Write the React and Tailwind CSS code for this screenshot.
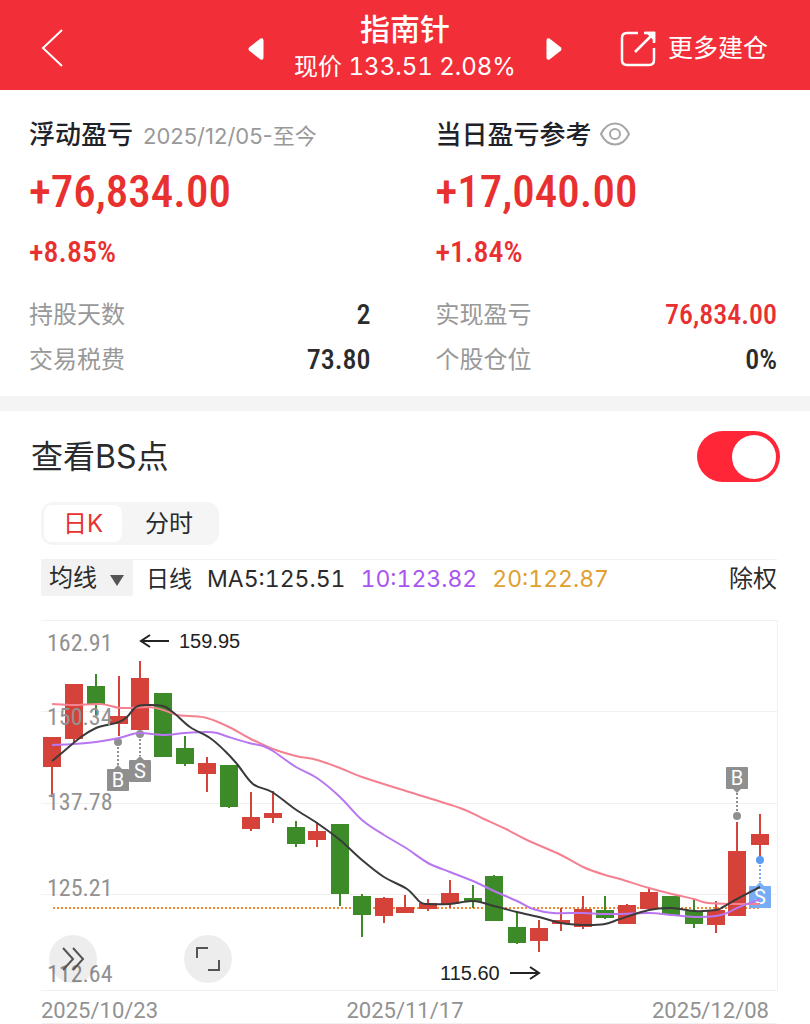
import { useState } from "react";

// [x, high, open/close top, open/close bottom, low, direction]
const CANDLES = [
    [11, 117, 117, 147, 177, "up"],
    [33, 64, 64, 119, 125, "up"],
    [55, 54, 66, 84, 95, "down"],
    [78, 56, 96, 104, 116, "up"],
    [99, 41, 58, 110, 114, "up"],
    [122, 73, 73, 137, 137, "down"],
    [144, 116, 128, 144, 146, "down"],
    [166, 137, 143, 154, 172, "up"],
    [188, 145, 145, 187, 188, "down"],
    [210, 172, 197, 209, 211, "up"],
    [232, 171, 193, 198, 203, "up"],
    [255, 201, 207, 224, 227, "down"],
    [276, 202, 211, 220, 227, "up"],
    [299, 204, 204, 274, 286, "down"],
    [321, 274, 276, 295, 317, "down"],
    [343, 277, 278, 296, 303, "up"],
    [364, 275, 287, 293, 293, "up"],
    [387, 279, 283, 289, 291, "up"],
    [409, 260, 273, 284, 288, "up"],
    [432, 265, 278, 282, 288, "down"],
    [453, 255, 256, 301, 301, "down"],
    [476, 292, 307, 323, 324, "down"],
    [498, 300, 308, 321, 332, "up"],
    [520, 288, 300, 304, 311, "up"],
    [542, 276, 289, 307, 309, "up"],
    [564, 276, 290, 298, 299, "down"],
    [586, 284, 285, 304, 304, "up"],
    [608, 268, 272, 289, 289, "up"],
    [630, 276, 276, 295, 296, "down"],
    [653, 279, 291, 304, 308, "down"],
    [675, 281, 290, 305, 313, "up"],
    [696, 202, 231, 296, 296, "up"],
    [719, 194, 214, 225, 237, "up"],
];

const MA5 = [
    [11, 141], [22, 132], [40, 117], [55, 108], [66, 105], [78, 102], [86, 97], [95, 87], [105, 85], [122, 86],
    [133, 93], [149, 107], [169, 118], [184, 131], [196, 144], [212, 164], [231, 172], [254, 189], [276, 203],
    [299, 220], [321, 240], [343, 257], [366, 269], [379, 282], [387, 284], [409, 284], [432, 281], [453, 286],
    [476, 292], [498, 297], [520, 303], [542, 305], [564, 304], [579, 299], [608, 290], [631, 288], [653, 291],
    [675, 290], [682, 287], [696, 279], [719, 267],
];

const MA10 = [
    [11, 125], [33, 124], [55, 122], [78, 118], [92, 114], [101, 113], [122, 115], [144, 113], [166, 112],
    [176, 113], [188, 117], [208, 123], [222, 126], [232, 131], [255, 147], [276, 158], [299, 177], [321, 200],
    [343, 215], [365, 228], [387, 243], [409, 252], [432, 261], [453, 271], [476, 281], [492, 289], [512, 293],
    [542, 293], [559, 294], [579, 294], [608, 293], [631, 295], [653, 297], [675, 296], [686, 293], [696, 288],
    [719, 279],
];

const MA20 = [
    [11, 84], [33, 85], [60, 84], [80, 88], [108, 87], [122, 90], [136, 95], [149, 96], [166, 98], [188, 107],
    [208, 118], [232, 129], [255, 136], [276, 140], [299, 148], [321, 157], [365, 171], [419, 188], [443, 199],
    [465, 209], [486, 220], [520, 235], [542, 247], [564, 255], [579, 259], [608, 268], [631, 274], [653, 279],
    [667, 283], [696, 284], [719, 284],
];

const PRICE_LABELS = [
    { text: "162.91", y: 31 },
    { text: "150.34", y: 105 },
    { text: "137.78", y: 190 },
    { text: "125.21", y: 276 },
    { text: "112.64", y: 362 },
];

// y is where the flag box starts, dot is the price point it belongs to
const FLAGS = [
    { label: "B", x: 77, y: 149, dot: 122, color: "#8f8f8f", dotColor: "#8f8f8f" },
    { label: "S", x: 99, y: 140, dot: 114, color: "#8f8f8f", dotColor: "#8f8f8f" },
    { label: "B", x: 696, y: 147, dot: 196, color: "#8f8f8f", dotColor: "#8f8f8f" },
    { label: "S", x: 719, y: 266, dot: 240, color: "#76adf5", dotColor: "#5a9cf0" },
];

const smoothPath = (points) => {
    let d = `M${points[0][0]} ${points[0][1]}`;
    for (let i = 0; i < points.length - 1; i++) {
        const p0 = points[i - 1] || points[i];
        const p1 = points[i];
        const p2 = points[i + 1];
        const p3 = points[i + 2] || p2;
        d += ` C${p1[0] + (p2[0] - p0[0]) / 6} ${p1[1] + (p2[1] - p0[1]) / 6}`;
        d += ` ${p2[0] - (p3[0] - p1[0]) / 6} ${p2[1] - (p3[1] - p1[1]) / 6} ${p2[0]} ${p2[1]}`;
    }
    return d;
};

const Flag = ({ label, x, y, dot, color, dotColor }) => {
    const below = dot < y;
    return (
        <g>
            <line
                x1={x}
                x2={x}
                y1={below ? dot + 5 : y + 26}
                y2={below ? y - 4 : dot - 5}
                stroke={color}
                strokeWidth="2"
                strokeDasharray="2 2"
            />
            <circle cx={x} cy={dot} r="4" fill={dotColor} />
            <rect x={x - 11} y={y} width="22" height="22" rx="1" fill={color} />
            <path
                d={below ? `M${x - 4} ${y}l4 -4l4 4z` : `M${x - 4} ${y + 22}l4 4l4 -4z`}
                fill={color}
            />
            <text x={x} y={y + 18} textAnchor="middle" fill="#fff" className="font-['Roboto'] text-[20px]">
                {label}
            </text>
        </g>
    );
};

const KLineChart = () => (
    <svg viewBox="0 0 736 371" className="block w-full h-auto overflow-visible" role="img" aria-label="日K">
        <g stroke="#f1f1f1" strokeWidth="1">
            <path d="M0 .5H736M0 91.5H736M0 183.5H736M0 274.5H736M0 370.5H736M736.5 0V371" />
        </g>
        <line x1="12" x2="718" y1="288" y2="288" stroke="#f58a35" strokeWidth="2" strokeDasharray="2 2" />

        {CANDLES.map(([x, high, top, bottom, low, dir]) => (
            <g key={x} fill={dir === "up" ? "#d5423a" : "#3c8a28"}>
                <rect x={x - 1} y={high} width="2" height={low - high} />
                <rect x={x - 9} y={top} width="18" height={bottom - top} />
            </g>
        ))}

        {FLAGS.map((flag) => (
            <Flag key={flag.x} {...flag} />
        ))}

        <g fill="none" strokeWidth="2">
            <path d={smoothPath(MA20)} stroke="#f5808f" />
            <path d={smoothPath(MA10)} stroke="#b877f0" />
            <path d={smoothPath(MA5)} stroke="#3a3a3a" />
        </g>

        <g fill="#929292" className="font-['Roboto_Condensed','Liberation_Sans_Narrow','Roboto'] text-[24px]">
            {PRICE_LABELS.map(({ text, y }) => (
                <text key={text} x="6" y={y}>
                    {text}
                </text>
            ))}
        </g>

        <g fill="#222" className="font-['Liberation_Sans'] text-[20px]">
            <text x="138" y="28">159.95</text>
            <text x="399" y="360">115.60</text>
        </g>
        <g fill="none" stroke="#222" strokeWidth="2">
            <path d="M128 21H100M109 15L100 21L109 27" />
            <path d="M469 353H498M489 347L498 353L489 359" />
        </g>
    </svg>
);

const Stat = ({ label, value, red }) => (
    <div className="flex h-[45px] items-center justify-between">
        <dt className="text-2xl text-[#999]">{label}</dt>
        <dd
            className={`font-['Roboto_Condensed','Liberation_Sans_Narrow','Roboto'] text-[28px] font-medium ${red ? "text-[#e93030]" : "text-[#2b2b2b]"}`}
        >
            {value}
        </dd>
    </div>
);

const Profit = ({ title, extra, amount, percent, children }) => (
    <div>
        <div className="flex h-9 items-center gap-2">
            <h2 className="text-[26px] font-medium whitespace-nowrap text-[#1f2329]">{title}</h2>
            {extra}
        </div>
        <div className="font-['Roboto_Condensed','Liberation_Sans_Narrow','Roboto'] font-medium text-[#e93030]">
            <p className="mt-4 text-[45px] leading-[48px]">{amount}</p>
            <p className="mt-5 text-[30px] leading-8">{percent}</p>
        </div>
        <dl className="mt-6">{children}</dl>
    </div>
);

const App = () => {
    const [tab, setTab] = useState("day");
    const [showPoints, setShowPoints] = useState(true);

    return (
        <div className="min-h-screen bg-white font-['Inter','Noto_Sans_CJK_SC',sans-serif] text-[#2b2b2b]">
            <header className="grid h-[90px] grid-cols-[1fr_auto_1fr] items-center bg-[#f22e38] pt-2 text-white">
                <button type="button" aria-label="返回" className="ml-10 justify-self-start">
                    <svg width="24" height="40" viewBox="0 0 24 40" fill="none" stroke="currentColor" strokeWidth="2">
                        <path d="M22 1L3 19L22 37" />
                    </svg>
                </button>

                <div className="flex items-center gap-[30px]">
                    <button type="button" aria-label="上一只">
                        <svg width="16" height="24" viewBox="0 0 16 24" fill="currentColor">
                            <path d="M1 10.500Q0 12 1 13.500L12.500 22.500Q15.500 23.500 15.500 20.500V3.500Q15.500 .5 12.500 1.500Z" />
                        </svg>
                    </button>
                    <div className="text-center">
                        <h1 className="text-3xl leading-9 font-medium">指南针</h1>
                        <p className="text-2xl leading-10 tabular-nums">现价 133.51 2.08%</p>
                    </div>
                    <button type="button" aria-label="下一只">
                        <svg width="16" height="24" viewBox="0 0 16 24" fill="currentColor">
                            <path d="M15 10.500Q16 12 15 13.500L3.500 22.500Q.5 23.500 .5 20.500V3.500Q.5 .5 3.500 1.500Z" />
                        </svg>
                    </button>
                </div>

                <button type="button" className="mr-[42px] flex items-center gap-3 justify-self-end">
                    <svg width="36" height="36" viewBox="0 0 36 36" fill="none" stroke="currentColor" strokeWidth="2.5">
                        <path d="M18 2H7Q2 2 2 7V29Q2 34 7 34H29Q34 34 34 29V17" />
                        <path d="M15 21L33 3M24 2H34V12" />
                        <path d="M28 2H34V8Z" fill="currentColor" />
                    </svg>
                    <span className="text-[25px]">更多建仓</span>
                </button>
            </header>

            <section className="grid grid-cols-2 gap-[65px] pt-[26px] pr-[33px] pb-[14px] pl-[29px]">
                <Profit
                    title="浮动盈亏"
                    extra={
                        <span className="pt-1 pl-[2px] text-[22px] whitespace-nowrap text-[#999]">
                            2025/12/05-至今
                        </span>
                    }
                    amount="+76,834.00"
                    percent="+8.85%"
                >
                    <Stat label="持股天数" value="2" />
                    <Stat label="交易税费" value="73.80" />
                </Profit>
                <Profit
                    title="当日盈亏参考"
                    extra={
                        <button type="button" aria-label="隐藏金额" className="text-[#a6a6a6]">
                            <svg width="30" height="24" viewBox="0 0 30 24" fill="none" stroke="currentColor" strokeWidth="2">
                                <path d="M1 12Q6 1.500 15 1.500T29 12Q24 22.500 15 22.500T1 12Z" />
                                <circle cx="15" cy="12" r="5" />
                            </svg>
                        </button>
                    }
                    amount="+17,040.00"
                    percent="+1.84%"
                >
                    <Stat label="实现盈亏" value="76,834.00" red />
                    <Stat label="个股仓位" value="0%" />
                </Profit>
            </section>

            <div className="h-[15px] bg-[#f4f4f4]" />

            <section className="pt-5">
                <div className="flex h-[51px] items-center justify-between pr-[30px] pl-[31px]">
                    <label htmlFor="bs-points" className="text-[32px]">
                        查看BS点
                    </label>
                    <input
                        id="bs-points"
                        type="checkbox"
                        role="switch"
                        checked={showPoints}
                        onChange={(e) => setShowPoints(e.target.checked)}
                        className="flex h-[51px] w-[83px] appearance-none items-center rounded-full bg-gray-300 px-1 before:size-11 before:rounded-full before:bg-white checked:justify-end checked:bg-[#ff2637]"
                    />
                </div>

                <div className="mt-5 pr-[33px] pl-[41px]">
                    <div className="inline-flex h-[43px] rounded-xl bg-[#f5f5f5] p-[3px] align-top text-2xl">
                        <button
                            type="button"
                            onClick={() => setTab("day")}
                            className={`w-[78px] rounded-lg ${tab === "day" ? "bg-white text-[#e93030]" : ""}`}
                        >
                            日K
                        </button>
                        <button
                            type="button"
                            onClick={() => setTab("minute")}
                            className={`w-[94px] rounded-lg ${tab === "minute" ? "bg-white text-[#e93030]" : ""}`}
                        >
                            分时
                        </button>
                    </div>

                    <div className="mt-[14px] flex h-[37px] items-center border-t border-[#f1f1f1] text-2xl">
                        <div className="relative">
                            <select
                                aria-label="指标"
                                className="block h-9 w-[92px] appearance-none rounded-xs bg-[#f2f2f2] pl-2 leading-9"
                            >
                                <option>均线</option>
                            </select>
                            <svg
                                className="pointer-events-none absolute top-[15px] right-[9px]"
                                width="14"
                                height="11"
                                viewBox="0 0 14 11"
                                fill="#555"
                            >
                                <path d="M0 0H14L7 11Z" />
                            </svg>
                        </div>
                        <div className="flex flex-1 items-center pt-[2px] whitespace-nowrap">
                            <div className="ml-[13px] flex gap-[15px] text-[23px] tabular-nums">
                                <span>日线</span>
                                <span>MA5:125.51</span>
                                <span className="text-[#a855f0]">10:123.82</span>
                                <span className="text-[#e0a030]">20:122.87</span>
                            </div>
                            <button type="button" className="ml-auto">
                                除权
                            </button>
                        </div>
                    </div>

                    <div className="relative mt-6">
                        <KLineChart />
                        <div className="absolute bottom-2 left-2 flex gap-[87px] text-[#555]">
                            <button
                                type="button"
                                aria-label="展开"
                                className="flex size-12 items-center justify-center rounded-full bg-black/7"
                            >
                                <svg width="24" height="24" viewBox="0 0 24 24" fill="none" stroke="currentColor" strokeWidth="2">
                                    <path d="M2 1L12 12L2 23M12 1L22 12L12 23" />
                                </svg>
                            </button>
                            <button
                                type="button"
                                aria-label="全屏"
                                className="flex size-12 items-center justify-center rounded-full bg-black/7"
                            >
                                <svg width="26" height="26" viewBox="0 0 26 26" fill="none" stroke="currentColor" strokeWidth="2">
                                    <path d="M2 12V2H13M24 14V24H13" />
                                </svg>
                            </button>
                        </div>
                    </div>

                    <div className="flex h-[33px] items-center justify-between border-b border-[#f1f1f1] pr-2 pt-[6px] font-['Roboto'] text-[22px] text-[#929292]">
                        <span>2025/10/23</span>
                        <span>2025/11/17</span>
                        <span>2025/12/08</span>
                    </div>
                </div>
            </section>
        </div>
    );
};

export default App;
